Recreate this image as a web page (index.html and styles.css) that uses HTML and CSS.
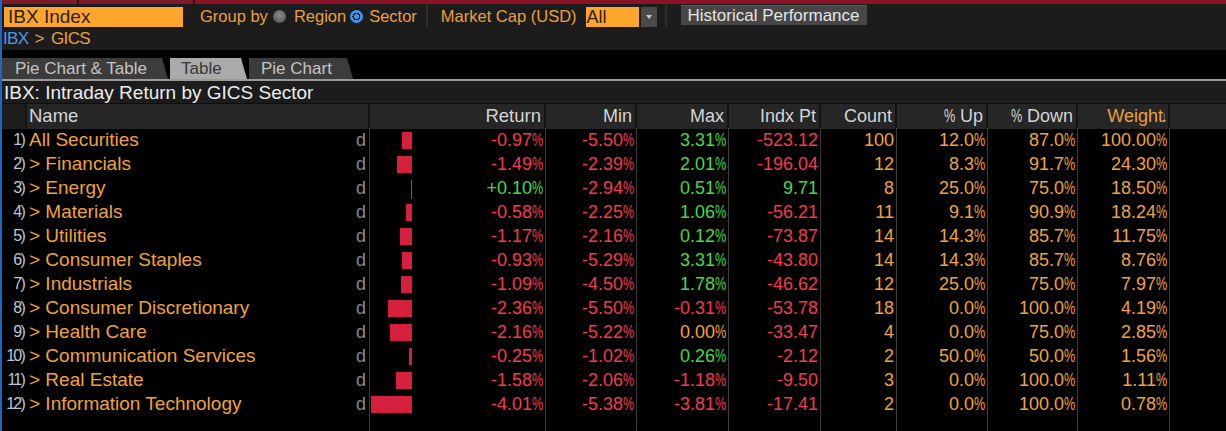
FILE: index.html
```html
<!DOCTYPE html>
<html lang="en">
<head>
<meta charset="utf-8">
<title>IBX Index - GICS</title>
<link rel="stylesheet" href="styles.css">
</head>
<body>
<div class="app">
  <div class="topstrip"><span class="ts ts1"></span><span class="ts ts2"></span><span class="ts ts3"></span></div>

  <div class="toolbar">
    <div class="secbox">IBX Index</div>
    <div class="group">
      <span class="lbl">Group by</span>
      <span class="radio off"></span>
      <span class="lbl">Region</span>
      <span class="radio on"></span>
      <span class="lbl">Sector</span>
    </div>
    <div class="vsep"></div>
    <div class="mcap">
      <span class="lbl">Market Cap (USD)</span>
      <div class="select"><span class="selval">All</span><span class="selbtn"><span class="tri"></span></span></div>
    </div>
    <div class="vsep"></div>
    <div class="btn">Historical Performance</div>
  </div>

  <div class="crumb"><span class="crumb-root">IBX</span><span class="crumb-sep">&gt;</span><span class="crumb-cur">GICS</span></div>

  <div class="tabs">
    <div class="tab">Pie Chart &amp; Table</div>
    <div class="tab active">Table</div>
    <div class="tab">Pie Chart</div>
  </div>

  <div class="title">IBX: Intraday Return by GICS Sector</div>

  <div class="grid">
    <div class="row head">
      <div class="c num"></div>
      <div class="c name">Name</div>
      <div class="c hret">Return</div>
      <div class="c">Min</div>
      <div class="c">Max</div>
      <div class="c">Indx Pt</div>
      <div class="c">Count</div>
      <div class="c"><i class="pct">%</i> Up</div>
      <div class="c"><i class="pct">%</i> Down</div>
      <div class="c wt">Weight<span class="arrow">↓</span></div>
      <div class="c fill"></div>
    </div>

    <div class="row">
      <div class="c num">1)</div>
      <div class="c name"><span class="nm">All Securities</span><span class="d">d</span></div>
      <div class="c ret"><span class="bararea"><span class="bar neg" style="width:10px"></span></span><span class="red">-0.97<i class="pct">%</i></span></div>
      <div class="c red">-5.50<i class="pct">%</i></div>
      <div class="c grn">3.31<i class="pct">%</i></div>
      <div class="c red">-523.12</div>
      <div class="c org">100</div>
      <div class="c org">12.0<i class="pct">%</i></div>
      <div class="c org">87.0<i class="pct">%</i></div>
      <div class="c org">100.00<i class="pct">%</i></div>
      <div class="c fill"></div>
    </div>

    <div class="row">
      <div class="c num">2)</div>
      <div class="c name"><span class="nm">&gt; Financials</span><span class="d">d</span></div>
      <div class="c ret"><span class="bararea"><span class="bar neg" style="width:15.5px"></span></span><span class="red">-1.49<i class="pct">%</i></span></div>
      <div class="c red">-2.39<i class="pct">%</i></div>
      <div class="c grn">2.01<i class="pct">%</i></div>
      <div class="c red">-196.04</div>
      <div class="c org">12</div>
      <div class="c org">8.3<i class="pct">%</i></div>
      <div class="c org">91.7<i class="pct">%</i></div>
      <div class="c org">24.30<i class="pct">%</i></div>
      <div class="c fill"></div>
    </div>

    <div class="row">
      <div class="c num">3)</div>
      <div class="c name"><span class="nm">&gt; Energy</span><span class="d">d</span></div>
      <div class="c ret"><span class="bararea"><span class="bar pos" style="width:1px"></span></span><span class="grn">+0.10<i class="pct">%</i></span></div>
      <div class="c red">-2.94<i class="pct">%</i></div>
      <div class="c grn">0.51<i class="pct">%</i></div>
      <div class="c grn">9.71</div>
      <div class="c org">8</div>
      <div class="c org">25.0<i class="pct">%</i></div>
      <div class="c org">75.0<i class="pct">%</i></div>
      <div class="c org">18.50<i class="pct">%</i></div>
      <div class="c fill"></div>
    </div>

    <div class="row">
      <div class="c num">4)</div>
      <div class="c name"><span class="nm">&gt; Materials</span><span class="d">d</span></div>
      <div class="c ret"><span class="bararea"><span class="bar neg" style="width:6px"></span></span><span class="red">-0.58<i class="pct">%</i></span></div>
      <div class="c red">-2.25<i class="pct">%</i></div>
      <div class="c grn">1.06<i class="pct">%</i></div>
      <div class="c red">-56.21</div>
      <div class="c org">11</div>
      <div class="c org">9.1<i class="pct">%</i></div>
      <div class="c org">90.9<i class="pct">%</i></div>
      <div class="c org">18.24<i class="pct">%</i></div>
      <div class="c fill"></div>
    </div>

    <div class="row">
      <div class="c num">5)</div>
      <div class="c name"><span class="nm">&gt; Utilities</span><span class="d">d</span></div>
      <div class="c ret"><span class="bararea"><span class="bar neg" style="width:12px"></span></span><span class="red">-1.17<i class="pct">%</i></span></div>
      <div class="c red">-2.16<i class="pct">%</i></div>
      <div class="c grn">0.12<i class="pct">%</i></div>
      <div class="c red">-73.87</div>
      <div class="c org">14</div>
      <div class="c org">14.3<i class="pct">%</i></div>
      <div class="c org">85.7<i class="pct">%</i></div>
      <div class="c org">11.75<i class="pct">%</i></div>
      <div class="c fill"></div>
    </div>

    <div class="row">
      <div class="c num">6)</div>
      <div class="c name"><span class="nm">&gt; Consumer Staples</span><span class="d">d</span></div>
      <div class="c ret"><span class="bararea"><span class="bar neg" style="width:9.6px"></span></span><span class="red">-0.93<i class="pct">%</i></span></div>
      <div class="c red">-5.29<i class="pct">%</i></div>
      <div class="c grn">3.31<i class="pct">%</i></div>
      <div class="c red">-43.80</div>
      <div class="c org">14</div>
      <div class="c org">14.3<i class="pct">%</i></div>
      <div class="c org">85.7<i class="pct">%</i></div>
      <div class="c org">8.76<i class="pct">%</i></div>
      <div class="c fill"></div>
    </div>

    <div class="row">
      <div class="c num">7)</div>
      <div class="c name"><span class="nm">&gt; Industrials</span><span class="d">d</span></div>
      <div class="c ret"><span class="bararea"><span class="bar neg" style="width:11.2px"></span></span><span class="red">-1.09<i class="pct">%</i></span></div>
      <div class="c red">-4.50<i class="pct">%</i></div>
      <div class="c grn">1.78<i class="pct">%</i></div>
      <div class="c red">-46.62</div>
      <div class="c org">12</div>
      <div class="c org">25.0<i class="pct">%</i></div>
      <div class="c org">75.0<i class="pct">%</i></div>
      <div class="c org">7.97<i class="pct">%</i></div>
      <div class="c fill"></div>
    </div>

    <div class="row">
      <div class="c num">8)</div>
      <div class="c name"><span class="nm">&gt; Consumer Discretionary</span><span class="d">d</span></div>
      <div class="c ret"><span class="bararea"><span class="bar neg" style="width:24.3px"></span></span><span class="red">-2.36<i class="pct">%</i></span></div>
      <div class="c red">-5.50<i class="pct">%</i></div>
      <div class="c red">-0.31<i class="pct">%</i></div>
      <div class="c red">-53.78</div>
      <div class="c org">18</div>
      <div class="c org">0.0<i class="pct">%</i></div>
      <div class="c org">100.0<i class="pct">%</i></div>
      <div class="c org">4.19<i class="pct">%</i></div>
      <div class="c fill"></div>
    </div>

    <div class="row">
      <div class="c num">9)</div>
      <div class="c name"><span class="nm">&gt; Health Care</span><span class="d">d</span></div>
      <div class="c ret"><span class="bararea"><span class="bar neg" style="width:22.2px"></span></span><span class="red">-2.16<i class="pct">%</i></span></div>
      <div class="c red">-5.22<i class="pct">%</i></div>
      <div class="c org">0.00<i class="pct">%</i></div>
      <div class="c red">-33.47</div>
      <div class="c org">4</div>
      <div class="c org">0.0<i class="pct">%</i></div>
      <div class="c org">75.0<i class="pct">%</i></div>
      <div class="c org">2.85<i class="pct">%</i></div>
      <div class="c fill"></div>
    </div>

    <div class="row">
      <div class="c num">10)</div>
      <div class="c name"><span class="nm">&gt; Communication Services</span><span class="d">d</span></div>
      <div class="c ret"><span class="bararea"><span class="bar neg" style="width:2.8px"></span></span><span class="red">-0.25<i class="pct">%</i></span></div>
      <div class="c red">-1.02<i class="pct">%</i></div>
      <div class="c grn">0.26<i class="pct">%</i></div>
      <div class="c red">-2.12</div>
      <div class="c org">2</div>
      <div class="c org">50.0<i class="pct">%</i></div>
      <div class="c org">50.0<i class="pct">%</i></div>
      <div class="c org">1.56<i class="pct">%</i></div>
      <div class="c fill"></div>
    </div>

    <div class="row">
      <div class="c num">11)</div>
      <div class="c name"><span class="nm">&gt; Real Estate</span><span class="d">d</span></div>
      <div class="c ret"><span class="bararea"><span class="bar neg" style="width:16.3px"></span></span><span class="red">-1.58<i class="pct">%</i></span></div>
      <div class="c red">-2.06<i class="pct">%</i></div>
      <div class="c red">-1.18<i class="pct">%</i></div>
      <div class="c red">-9.50</div>
      <div class="c org">3</div>
      <div class="c org">0.0<i class="pct">%</i></div>
      <div class="c org">100.0<i class="pct">%</i></div>
      <div class="c org">1.11<i class="pct">%</i></div>
      <div class="c fill"></div>
    </div>

    <div class="row">
      <div class="c num">12)</div>
      <div class="c name"><span class="nm">&gt; Information Technology</span><span class="d">d</span></div>
      <div class="c ret"><span class="bararea"><span class="bar neg" style="width:41.3px"></span></span><span class="red">-4.01<i class="pct">%</i></span></div>
      <div class="c red">-5.38<i class="pct">%</i></div>
      <div class="c red">-3.81<i class="pct">%</i></div>
      <div class="c red">-17.41</div>
      <div class="c org">2</div>
      <div class="c org">0.0<i class="pct">%</i></div>
      <div class="c org">100.0<i class="pct">%</i></div>
      <div class="c org">0.78<i class="pct">%</i></div>
      <div class="c fill"></div>
    </div>

    <div class="row tail">
      <div class="c num"></div>
      <div class="c name"></div>
      <div class="c ret"></div>
      <div class="c"></div>
      <div class="c"></div>
      <div class="c"></div>
      <div class="c"></div>
      <div class="c"></div>
      <div class="c"></div>
      <div class="c"></div>
      <div class="c fill"></div>
    </div>
  </div>
</div>
</body>
</html>
```

FILE: styles.css
```css
* { box-sizing: border-box; }

html, body {
  margin: 0;
  padding: 0;
  background: #000;
}

body {
  font-family: "Liberation Sans", Arial, sans-serif;
  color: #e0e0e0;
}

.app {
  width: 1226px;
  height: 431px;
  overflow: hidden;
  background: #000;
  border-left: 2px solid #2065c0;
  display: flex;
  flex-direction: column;
}

/* top red strip */
.topstrip {
  height: 4px;
  display: flex;
  background: #8a1226;
  flex: none;
}
.ts { height: 4px; }
.ts1 { width: 77px; background: #7e1a2a; border-right: 2px solid #3a0c12; }
.ts2 { width: 116px; background: #7e1a2a; border-right: 2px solid #3a0c12; }
.ts3 { flex: 1; background: #8a1226; }

/* toolbar */
.toolbar {
  height: 24px;
  flex: none;
  background: #1c1c1c;
  display: flex;
  align-items: center;
  padding-left: 2px;
}
.secbox {
  width: 179px;
  height: 20px;
  background: #ffa52e;
  color: #2c2010;
  font-size: 19px;
  line-height: 20px;
  padding-left: 4px;
  margin-top: 2px;
}
.lbl {
  color: #eaa03c;
  font-size: 16.5px;
  line-height: 20px;
}
.group {
  display: flex;
  align-items: center;
  margin-left: 17px;
}
.radio {
  width: 13px;
  height: 13px;
  border-radius: 50%;
  display: inline-block;
  flex: none;
}
.radio.off {
  margin: 0 8px 0 5px;
  background: radial-gradient(circle at 50% 40%, #8a8a8a 0, #6a6a6a 55%, #4a4a4a 100%);
}
.radio.on {
  margin: 0 6px 0 4px;
  background: radial-gradient(circle, #3d96ee 0 2.6px, #0c1a2a 2.6px 4px, #3d96ee 4px);
}
.vsep {
  width: 2px;
  height: 22px;
  background: #2e2e2e;
  margin-left: 9px;
}
.mcap {
  display: flex;
  align-items: center;
  margin-left: 13px;
}
.select {
  display: flex;
  height: 20px;
  margin-left: 9px;
  margin-top: 2px;
}
.selval {
  width: 53px;
  background: #ffa52e;
  color: #2c2010;
  font-size: 18px;
  line-height: 20px;
  padding-left: 1px;
}
.selbtn {
  width: 16px;
  margin-left: 2px;
  background: #4a4a4a;
  display: flex;
  align-items: center;
  justify-content: center;
}
.tri {
  width: 0;
  height: 0;
  border-left: 3px solid transparent;
  border-right: 3px solid transparent;
  border-top: 4px solid #c8c8c8;
}
.mcap + .vsep { margin-left: 8px; }
.btn {
  margin-left: 14px;
  height: 20px;
  width: 186px;
  background: #464646;
  color: #e4e4e4;
  font-size: 17px;
  line-height: 20px;
  padding-left: 7px;
  border-top: 1px solid #5a5a5a;
  margin-top: -2px;
}

/* breadcrumb */
.crumb {
  height: 22px;
  flex: none;
  background: #1c1c1c;
  font-size: 17px;
  line-height: 22px;
  padding-left: 1px;
  letter-spacing: -0.6px;
}
.crumb-root { color: #4a9be6; }
.crumb-sep { color: #eaa03c; margin: 0 7px 0 6px; }
.crumb-cur { color: #eaa03c; }

/* tabs */
.tabs {
  height: 31px;
  flex: none;
  background: #000;
  display: flex;
  align-items: flex-end;
  gap: 2px;
  border-bottom: 2px solid #9a9a9a;
}
.tab {
  height: 21px;
  background: #3c3c3c;
  color: #c4c4c4;
  font-size: 17px;
  line-height: 22px;
  padding-left: 13px;
  clip-path: polygon(0 0, calc(100% - 6px) 0, 100% 100%, 0 100%);
}
.tab:nth-child(1) { width: 166px; }
.tab:nth-child(2) { width: 77px; padding-left: 11px; }
.tab:nth-child(3) { width: 104px; padding-left: 12px; }
.tab.active { background: #aaaaaa; color: #383838; }

/* title */
.title {
  height: 23px;
  flex: none;
  background: #1c1c1c;
  color: #ececec;
  font-size: 19px;
  line-height: 23px;
  padding-left: 2px;
  border-bottom: 1px solid #0e0e0e;
}

/* grid table */
.grid {
  flex: 1;
  display: flex;
  flex-direction: column;
}
.row {
  display: grid;
  grid-template-columns: 25px 343px 176px 91px 92px 92px 76px 91px 90px 92px 1fr;
  height: 24px;
  flex: none;
}
.row.tail { flex: 1; height: auto; }

.c {
  font-size: 18px;
  line-height: 24px;
  text-align: right;
  padding-right: 2px;
  white-space: nowrap;
  border-right: 1px solid #3c3c3c;
}
.c.num, .c.fill { border-right: none; }

.head .c {
  background: #262626;
  color: #d4d4d4;
  border-right: 2px solid #141414;
  padding-right: 3px;
}
.head .c.num { background: #1e1e1e; border-right: 2px solid #141414; }
.head .c.fill { border-right: none; }
.head .c.name {
  text-align: left;
  padding-left: 2px;
  font-size: 18.5px;
}
.head .c.hret { font-size: 18.5px; }
.head .c.wt { color: #eaa03c; padding-right: 0; }
.arrow {
  color: #c8c8c8;
  font-size: 16px;
  margin-left: -3px;
  display: inline-block;
  transform: scaleX(0.7);
}

.c.num {
  font-size: 16px;
  color: #bcc6d8;
  letter-spacing: -1.8px;
  padding-right: 3px;
}

.c.name {
  display: flex;
  justify-content: space-between;
  padding-left: 2px;
  padding-right: 3px;
  text-align: left;
}
.nm {
  color: #f0a33a;
  font-size: 19px;
}
.d { color: #8a8a8a; font-size: 18px; }

.c.ret {
  display: flex;
  align-items: center;
  justify-content: space-between;
}
.bararea {
  width: 42px;
  height: 17px;
  display: flex;
  justify-content: flex-end;
}
.bar { height: 17px; display: block; }
.bar.neg { background: #d41f3d; }
.bar.pos { background: #2b8f2b; height: 19px; }

.pct {
  font-style: normal;
  display: inline-block;
  width: 11px;
  transform: scaleX(0.7);
  transform-origin: left center;
}

.red { color: #f53a4e; }
.grn { color: #47d847; }
.org { color: #f0a33a; }
```
